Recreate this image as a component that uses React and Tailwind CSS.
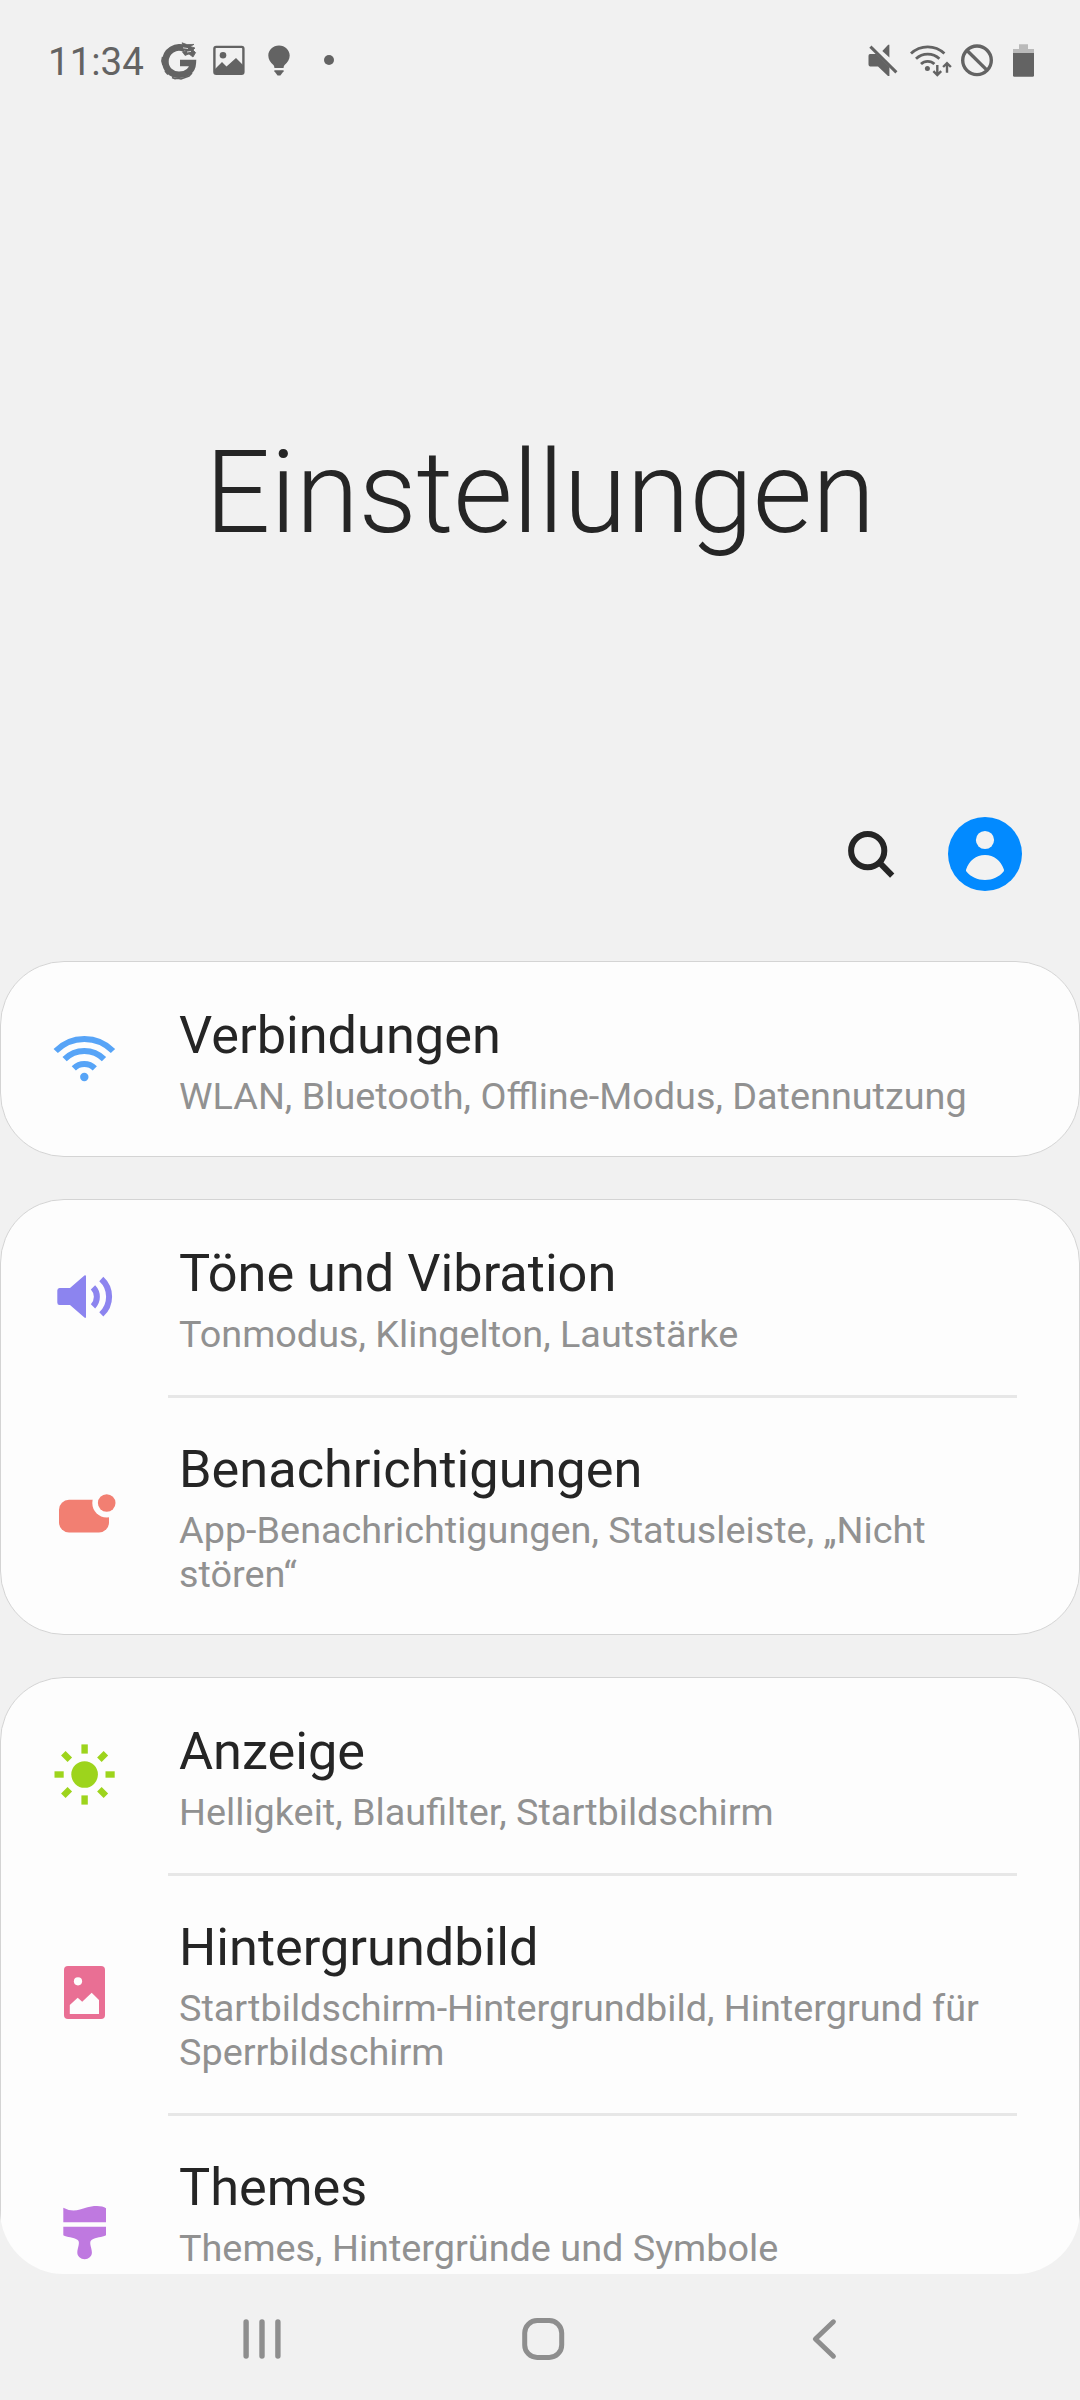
import React from 'react';

const WifiIcon = () => (
  <svg viewBox="0 0 72 72" className="w-[72px] h-[72px]" fill="none" stroke="#57a4f7" strokeWidth="6">
    <path d="M7.7 29A40 40 0 0 1 65 29" />
    <path d="M16.6 37.2A27.8 27.8 0 0 1 56 37.2" />
    <path d="M25.8 46.3A15 15 0 0 1 46.8 46.3" />
    <circle cx="36.3" cy="55" r="4.2" fill="#57a4f7" stroke="none" />
  </svg>
);

const SoundIcon = () => (
  <svg viewBox="0 0 72 72" className="w-[72px] h-[72px]" fill="none" stroke="#8c84ef" strokeWidth="6">
    <path d="M11.5 28H22L36.4 15.4Q38 14.6 38 16.6V56.4Q38 58.6 36.4 57.6L22 45H11.5Q9.3 45 9.3 42.5V30.5Q9.3 28 11.5 28Z" fill="#8c84ef" stroke="none" />
    <path d="M45 27.3A13.7 13.7 0 0 1 45 46.4" />
    <path d="M53.3 19A24 24 0 0 1 53.3 54.4" />
  </svg>
);

const NotificationIcon = () => (
  <svg viewBox="0 0 72 72" className="w-[72px] h-[72px]" fill="#f27f72">
    <rect x="11" y="21.7" width="50" height="32.7" rx="10" />
    <circle cx="58.7" cy="25" r="14.4" fill="#fdfdfd" />
    <circle cx="58.7" cy="25" r="8.8" />
  </svg>
);

const DisplayIcon = () => (
  <svg viewBox="0 0 72 72" className="w-[72px] h-[72px]" fill="#9dd41c">
    <circle cx="36.6" cy="36.5" r="13.3" />
    {[0, 45, 90, 135, 180, 225, 270, 315].map((angle) => (
      <rect key={angle} x="33.4" y="6.4" width="6.4" height="9.2" transform={`rotate(${angle} 36.6 36.5)`} />
    ))}
  </svg>
);

const WallpaperIcon = () => (
  <svg viewBox="0 0 72 72" className="w-[72px] h-[72px]" fill="#e96f94">
    <rect x="16" y="10" width="41" height="53" rx="4" />
    <circle cx="30" cy="25.3" r="4.1" fill="#fdfdfd" />
    <path d="M21.8 58V49L29.7 41.7L34.2 45.8L43.7 36.8L51 44V58Z" fill="#fdfdfd" />
  </svg>
);

const ThemesIcon = () => (
  <svg viewBox="0 0 72 72" className="w-[72px] h-[72px]" fill="#bf79e0">
    <path d="M15.3 11.8Q23 16.2 32 13.6Q40 10.8 46 10.1Q54 9.4 58 12.3V26.2H15.3Z" />
    <path d="M15.3 30.7H58V39.3C54 41.3 48 41.2 43.5 44C40.5 46.4 43.9 52 43.9 56.5C43.9 60.4 40.6 63.2 36.7 63.2C32.7 63.2 29.3 60.4 29.3 56.5C29.3 52 32.6 46.4 29.7 44C25.3 41.2 19 41.3 15.3 39.3Z" />
  </svg>
);

const groups = [
  [
    { title: 'Verbindungen', text: 'WLAN, Bluetooth, Offline-Modus, Datennutzung', icon: WifiIcon },
  ],
  [
    { title: 'Töne und Vibration', text: 'Tonmodus, Klingelton, Lautstärke', icon: SoundIcon },
    { title: 'Benachrichtigungen', text: 'App-Benachrichtigungen, Statusleiste, „Nicht stören“', icon: NotificationIcon },
  ],
  [
    { title: 'Anzeige', text: 'Helligkeit, Blaufilter, Startbildschirm', icon: DisplayIcon },
    { title: 'Hintergrundbild', text: 'Startbildschirm-Hintergrundbild, Hintergrund für Sperrbildschirm', icon: WallpaperIcon },
    { title: 'Themes', text: 'Themes, Hintergründe und Symbole', icon: ThemesIcon, tall: true },
  ],
];

const StatusBar = () => (
  <div className="flex items-center justify-between h-[120px] pl-[48px] pr-[40px] text-[#636363]">
    <div className="flex items-center gap-[10px]">
      <span className="w-[102px] pt-[4px] text-[38.5px] leading-[44px] whitespace-nowrap">11:34</span>
      <svg viewBox="0 0 40 40" className="w-[40px] h-[40px]" fill="none" stroke="currentColor">
        <path d="M25 9C16 4.4 5.4 11 5.4 21.5C5.4 29.6 11.4 34.8 19 34.8C26.6 34.8 32.4 30.6 32.8 23H20" strokeWidth="6.6" />
        <path d="M2.6 17L1.9 21L3 25M5 31L8 34.5M12 37.4L15 38.6L18 38.2L21 39L25 37.6L29 36L32 33" strokeWidth="1.6" />
        <path d="M19 4.5L23 5L22 2.8L27 4.6L34 4.4L30 6.4L35 8L33 10L35.6 12.6L33 17L29 14L25 15.4L22.6 12L26 11L22 9Z" fill="currentColor" strokeWidth="0.8" />
        <path d="M23 7.8L28 8.6M27 12L31 11.4" stroke="#f1f1f1" strokeWidth="0.8" />
      </svg>
      <svg viewBox="0 0 40 40" className="w-[40px] h-[40px]" fill="currentColor">
        <rect x="4.4" y="6.9" width="29" height="27" rx="1.8" fill="none" stroke="currentColor" strokeWidth="2.4" />
        <circle cx="13" cy="15.3" r="3.3" />
        <path d="M5 29L12 22L16.5 26.4L26 18L33.5 25.5V34H5Z" />
      </svg>
      <svg viewBox="0 0 40 40" className="w-[40px] h-[40px]" fill="currentColor">
        <path d="M19 5.4C25 5.4 29.7 9.8 29.7 15.6C29.7 19.6 27.6 22.6 24.6 25C23.8 26 23.6 27.2 23.6 28H14.4C14.4 27.2 14.2 26 13.4 25C10.4 22.6 8.3 19.6 8.3 15.6C8.3 9.8 13 5.4 19 5.4Z" />
        <path d="M14.4 30.2H23.6V31.2L20.4 35.4H17.6L14.4 31.2Z" />
      </svg>
      <svg viewBox="0 0 40 40" className="w-[40px] h-[40px]" fill="currentColor">
        <circle cx="19" cy="20" r="5" />
      </svg>
    </div>
    <div className="flex items-center gap-[4px]">
      <svg viewBox="0 0 40 40" className="w-[40px] h-[40px]" fill="currentColor">
        <path d="M6 14H12.4L25.4 27V36H24L14 26.4H6Q4.5 26.4 4.5 24.6V15.8Q4.5 14 6 14Z" />
        <path d="M18.3 11L24.2 4.7H25.4V17.4Z" />
        <path d="M6.4 6.6L32.4 32.4" stroke="currentColor" strokeWidth="3" />
      </svg>
      <svg viewBox="0 0 44 40" className="w-[44px] h-[40px]" fill="none" stroke="currentColor" strokeWidth="2.8">
        <path d="M3 13.6A24 24 0 0 1 36.4 13.6" />
        <path d="M8 18.8A17 17 0 0 1 31.4 18.8" />
        <path d="M13 24A9.6 9.6 0 0 1 26.4 24" />
        <circle cx="19.4" cy="28.4" r="2.5" fill="currentColor" stroke="none" />
        <path d="M29.3 25V34M25.4 31.2L29.3 35L33.2 31.2" strokeWidth="2.4" />
        <path d="M39 32.8V23.4M35.1 27L39 23.2L42.9 27" strokeWidth="2.4" />
      </svg>
      <svg viewBox="0 0 40 40" className="w-[40px] h-[40px]" fill="none" stroke="currentColor" strokeWidth="3.4">
        <circle cx="21" cy="20.3" r="14.3" />
        <path d="M10.8 10.2L31.2 30.4" />
      </svg>
      <svg viewBox="0 0 40 40" className="w-[40px] h-[40px]" fill="currentColor">
        <path d="M19 4.2H28V9H34V13H13V9H19Z" fill="#bababa" />
        <path d="M13 13H34V35.4Q34 36.8 32.6 36.8H14.4Q13 36.8 13 35.4Z" />
      </svg>
    </div>
  </div>
);

const Toolbar = () => (
  <div className="flex items-center justify-end gap-[46px] h-[80px] pr-[58px]">
    <svg viewBox="0 0 60 60" className="w-[60px] h-[60px]" fill="none" stroke="#252525" strokeWidth="6">
      <circle cx="25.7" cy="26.7" r="16.6" />
      <path d="M37 38.2L50.2 51.6" />
    </svg>
    <svg viewBox="0 0 74 74" className="w-[74px] h-[74px]" fill="#f2f2f2">
      <circle cx="37" cy="37" r="37" fill="#028aff" />
      <circle cx="37" cy="23" r="9.1" />
      <path d="M18.4 54.5C17.9 53.9 17.9 53 18.2 52.2C21 44 28 38 37 38C46 38 53 44 55.8 52.2C56.1 53 56.1 53.9 55.6 54.5C51 60 44.6 63 37 63C29.4 63 23 60 18.4 54.5Z" />
    </svg>
  </div>
);

const SettingsRow = ({ item, last }) => {
  const Icon = item.icon;
  return (
    <>
      <div className={`flex items-center pl-[47px] pr-[70px] pt-[41px] ${last && !item.tall ? 'pb-[38px]' : 'pb-[39px]'} ${item.tall ? 'h-[237px]' : ''}`}>
        <div className="shrink-0 w-[72px] h-[72px] -mt-[7px]"><Icon /></div>
        <div className={`ml-[59px] flex-1 ${item.tall ? 'self-start' : ''}`}>
          <h2 className="text-[52.3px] leading-[60px] text-[#252525]">{item.title}</h2>
          <p className="mt-[9px] text-[37.8px] leading-[44px] text-[#919191]">{item.text}</p>
        </div>
      </div>
      {!last && <div className="h-[3px] ml-[167px] mr-[62px] bg-[#e7e7e7]" />}
    </>
  );
};

const NavBar = () => (
  <div className="flex items-center justify-between h-[126px] px-[232px] text-[#8e8e8e]">
    <svg viewBox="0 0 60 60" className="w-[60px] h-[60px]" stroke="currentColor" strokeWidth="5.4" strokeLinecap="round">
      <path d="M14.1 15V49M30 15V49M45.9 15V49" />
    </svg>
    <svg viewBox="0 0 60 60" className="w-[60px] h-[60px]" fill="none" stroke="currentColor" strokeWidth="5">
      <rect x="14.7" y="13.5" width="37" height="37" rx="12.5" />
    </svg>
    <svg viewBox="0 0 60 60" className="w-[60px] h-[60px]" fill="none" stroke="currentColor" strokeWidth="5" strokeLinecap="round" strokeLinejoin="round">
      <path d="M45.4 14.8L27.4 32L45.4 49.2" />
    </svg>
  </div>
);

const App = () => {
  return (
    <div className="w-[1080px] h-[2400px] overflow-hidden bg-[#f1f1f1] font-['Roboto',sans-serif]">
      <StatusBar />
      <h1 className="mt-[305px] text-center text-[115px] leading-[136px] tracking-[-0.3px] font-light text-[#252525]">Einstellungen</h1>
      <div className="mt-[253px]">
        <Toolbar />
      </div>
      <div className="mt-[67px] h-[1313px] overflow-hidden rounded-b-[64px] flex flex-col gap-[42px]">
        {groups.map((items, i) => (
          <div key={i} className="shrink-0 pt-[2px] bg-[#fdfdfd] border border-[#d4d4d4] rounded-[64px]">
            {items.map((item, j) => (
              <SettingsRow key={item.title} item={item} last={j === items.length - 1} />
            ))}
          </div>
        ))}
      </div>
      <NavBar />
    </div>
  );
};

export default App;
